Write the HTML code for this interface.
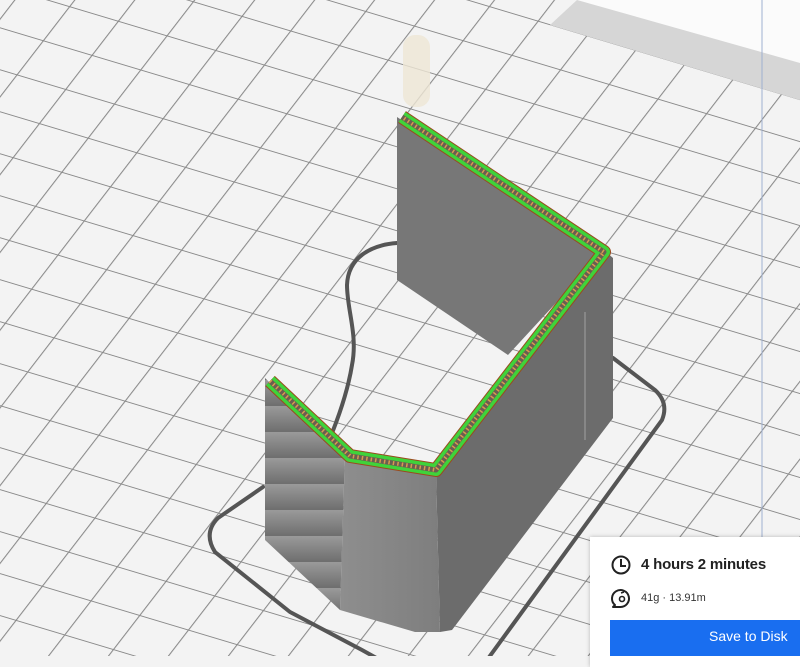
<!DOCTYPE html>
<html><head><meta charset="utf-8"><style>
html,body{margin:0;padding:0;width:800px;height:656px;overflow:hidden;background:#f3f3f3;font-family:"Liberation Sans",sans-serif}
svg{position:absolute;left:0;top:0}
.panel{position:absolute;left:590px;top:537px;width:220px;height:130px;background:#fff;box-shadow:0 0 4px rgba(0,0,0,.25)}
.t1{position:absolute;left:641px;top:556px;font-size:15px;font-weight:bold;color:#222;letter-spacing:-0.2px}
.t2{position:absolute;left:641px;top:592px;font-size:11px;color:#333}
.btn{position:absolute;left:610px;top:620px;width:200px;height:36px;background:#196ef0;color:#fff;font-size:14px;line-height:33px;text-indent:99px}
</style></head><body>
<svg width="800" height="656" viewBox="0 0 800 656">
<defs>
<pattern id="g" patternUnits="userSpaceOnUse" width="100" height="100" patternTransform="matrix(0.487,0.146,0.263,-0.341,586,36)">
<rect width="100" height="100" fill="#f3f3f3"/>
<path d="M0 0H100M0 0V100" stroke="#8a8a8a" stroke-width="4.5"/>
</pattern>
<pattern id="st" patternUnits="userSpaceOnUse" width="20" height="26" y="380">
<rect width="20" height="26" fill="url(#sg)"/>
</pattern>
<linearGradient id="sg" x1="0" y1="0" x2="0" y2="1">
<stop offset="0" stop-color="#9a9a9a"/><stop offset="1" stop-color="#6e6e6e"/>
</linearGradient>
<linearGradient id="fl" x1="0" y1="0" x2="1" y2="0">
<stop offset="0" stop-color="#8e8e8e"/><stop offset="1" stop-color="#7e7e7e"/>
</linearGradient>
</defs>
<rect width="800" height="656" fill="url(#g)"/>
<polygon points="550,25 800,100 800,0 577,0" fill="#d6d6d6"/>
<polygon points="577,0 800,63 800,0" fill="#fbfbfb"/>
<line x1="762" y1="0" x2="762" y2="540" stroke="#9fb0d0" stroke-width="1"/>
<rect x="403" y="35" width="27" height="72" rx="12" fill="#ede6d4" opacity="0.8"/>
<g fill="none" stroke="#555" stroke-width="4" stroke-linecap="round">
<path d="M397,243 C370,245 348,258 347,285 C347,310 358,335 352,365 C348,390 338,420 325,450"/>
<path d="M263,487 L218,518 Q203,533 215,552 L290,612 L362,650 L380,660"/>
<path d="M613,358 L655,390 Q669,403 662,420 L487,660"/>
</g>
<polygon points="397,117 603,252 508,355 397,280" fill="#777"/>
<polygon points="436,472 606,252 613,258 613,418 452,630 440,632" fill="#6c6c6c"/>
<line x1="585" y1="312" x2="585" y2="440" stroke="#909090" stroke-width="1.5"/>
<polygon points="345,455 436,472 440,632 415,632 340,610" fill="url(#fl)"/>
<polygon points="265,378 345,455 340,610 265,540" fill="url(#st)"/>
<g fill="none" stroke-linejoin="round">
<path d="M270,381 L350,456 L436,470 L604,252 L402,117" stroke="#9a4a1e" stroke-width="14"/>
<path d="M270,381 L350,456 L436,470 L604,252 L402,117" stroke="#3fd33a" stroke-width="12"/>
<path d="M270,381 L350,456 L436,470 L604,252 L402,117" stroke="#6a5e50" stroke-width="5"/>
<path d="M270,381 L350,456 L436,470 L604,252 L402,117" stroke="#d89a50" stroke-width="4" stroke-dasharray="1.5 3"/>
</g>
</svg>
<div class="panel"></div>
<svg width="800" height="656" viewBox="0 0 800 656" style="pointer-events:none">
<circle cx="621" cy="565" r="8.5" fill="none" stroke="#222" stroke-width="2"/>
<path d="M621,559 V566 H626" fill="none" stroke="#222" stroke-width="2"/>
<path d="M615,605 A8.5,8.5 0 1 1 620,607 L613,607 Z" fill="none" stroke="#222" stroke-width="2" stroke-linejoin="round"/>
<circle cx="622" cy="599" r="2.5" fill="none" stroke="#222" stroke-width="1.6"/>
<path d="M621,593 L624,592" stroke="#222" stroke-width="1.5"/>
</svg>
<div class="t1">4 hours 2 minutes</div>
<div class="t2">41g · 13.91m</div>
<div class="btn">Save to Disk</div>
</body></html>
